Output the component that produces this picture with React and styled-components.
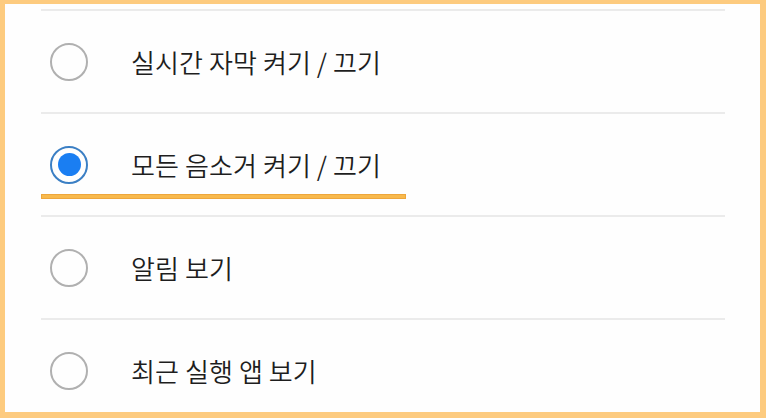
import React from 'react';
import styled, { createGlobalStyle } from 'styled-components';

const GlobalStyle = createGlobalStyle`
    html, body {
        margin: 0;
        padding: 0;
        background: #fdcb7f;
    }
`;

const Frame = styled.div`
    box-sizing: border-box;
    width: 766px;
    height: 418px;
    border-style: solid;
    border-color: #fdcb7f;
    border-width: 4px 6px 6px 5px;
    background: #fefefe;
    padding: 5px 35px 0 36px;
    overflow: hidden;
    font-family: "Noto Sans CJK KR", "Noto Sans", sans-serif;
`;

const List = styled.div`
    display: flex;
    flex-direction: column;
`;

const Row = styled.label`
    position: relative;
    display: flex;
    align-items: center;
    gap: 43px;
    height: 101px;
    padding-left: 9px;
    border-top: 2px solid #ebebeb;
    cursor: pointer;
`;

const Radio = styled.span`
    box-sizing: border-box;
    width: 38px;
    height: 38px;
    border-radius: 50%;
    border: 2px solid ${p => (p.checked ? '#3b7fc4' : '#b0b0b0')};
    display: flex;
    align-items: center;
    justify-content: center;
    flex-shrink: 0;

    &::after {
        content: '';
        display: ${p => (p.checked ? 'block' : 'none')};
        width: 23px;
        height: 23px;
        border-radius: 50%;
        background: #1a7ef2;
    }
`;

const Label = styled.span`
    font-size: 26px;
    font-weight: 350;
    color: #1e1e1e;
    letter-spacing: 0.1px;
    line-height: 1;
`;

const Highlight = styled.span`
    position: absolute;
    left: 0;
    bottom: 16px;
    width: 363px;
    height: 3px;
    background: #f8b94c;
    border: 1px solid #eda63c;
`;

const options = [
    { id: 'caption', text: '실시간 자막 켜기 / 끄기' },
    { id: 'mute', text: '모든 음소거 켜기 / 끄기', checked: true },
    { id: 'notify', text: '알림 보기' },
    { id: 'recent', text: '최근 실행 앱 보기' },
];

export default function App() {
    return (
        <>
            <GlobalStyle />
            <Frame>
                <List>
                    {options.map(o => (
                        <Row key={o.id}>
                            <Radio checked={o.checked} />
                            <Label>{o.text}</Label>
                            {o.checked && <Highlight />}
                        </Row>
                    ))}
                </List>
            </Frame>
        </>
    );
}
